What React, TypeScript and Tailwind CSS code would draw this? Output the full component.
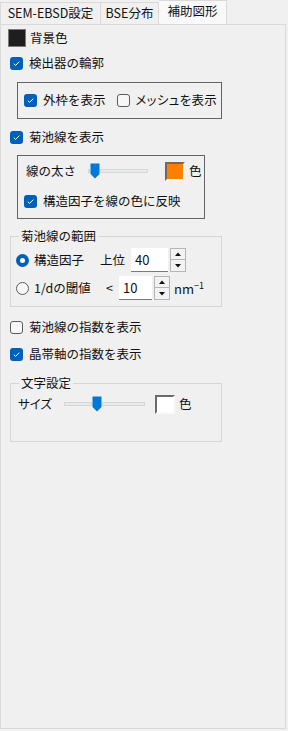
import React from 'react';

const Check = ({ checked }: { checked: boolean }) =>
  checked ? (
    <span className="w-[13px] h-[13px] shrink-0 rounded-[3px] bg-[#005fb8] flex items-center justify-center">
      <svg width="9" height="9" viewBox="0 0 9 9">
        <path d="M1.8 4.7 L3.6 6.4 L7.3 2.6" stroke="white" strokeWidth="1" fill="none" />
      </svg>
    </span>
  ) : (
    <span className="w-[13px] h-[13px] shrink-0 rounded-[3px] border border-[#5c5c5c] bg-[#f7f7f7]" />
  );

const Radio = ({ checked }: { checked: boolean }) =>
  checked ? (
    <span className="w-[13px] h-[13px] shrink-0 rounded-full bg-[#005fb8] flex items-center justify-center">
      <span className="w-[5px] h-[5px] rounded-full bg-white" />
    </span>
  ) : (
    <span className="w-[13px] h-[13px] shrink-0 rounded-full border border-[#5c5c5c] bg-[#f7f7f7]" />
  );

const CheckRow = ({ checked, label, className = '', labelClass = '' }: { checked: boolean; label: string; className?: string; labelClass?: string }) => (
  <div className={`flex items-center gap-[6px] h-[20px] whitespace-nowrap ${className}`}>
    <Check checked={checked} />
    <span className={labelClass}>{label}</span>
  </div>
);

const Thumb = () => (
  <svg width="10" height="16" viewBox="0 0 10 16" className="shrink-0">
    <path d="M0.5 0.5 H9.5 V11 L5 15.5 L0.5 11 Z" fill="#0078d7" />
  </svg>
);

const Slider = ({ before, after }: { before: number; after: number }) => (
  <div className="flex items-center">
    <div className="h-[4px] bg-[#e7eaea] border border-[#d6d6d6]" style={{ width: before }} />
    <Thumb />
    <div className="h-[4px] bg-[#e7eaea] border border-[#d6d6d6]" style={{ width: after }} />
  </div>
);

const Swatch = ({ color }: { color: string }) => (
  <span
    className="block w-[20px] h-[19px] shrink-0 border-2 border-t-[#6b6b6b] border-l-[#6b6b6b] border-r-[#fafafa] border-b-[#fafafa]"
    style={{ backgroundColor: color }}
  />
);

const Spinner = () => (
  <div className="flex flex-col gap-0 ml-[2px]">
    <span className="w-[16px] h-[12px] border border-[#b5b5b5] bg-[#f3f3f3] flex items-center justify-center">
      <svg width="6" height="4" viewBox="0 0 6 4"><path d="M0 4 L3 0.5 L6 4 Z" fill="#111" /></svg>
    </span>
    <span className="w-[16px] h-[12px] border border-t-0 border-[#b5b5b5] bg-[#f3f3f3] flex items-center justify-center">
      <svg width="6" height="4" viewBox="0 0 6 4"><path d="M0 0 L3 3.5 L6 0 Z" fill="#111" /></svg>
    </span>
  </div>
);

const NumBox = ({ value, width }: { value: string; width: string }) => (
  <div className="flex items-center">
    <span className={`${width} h-[24px] bg-white border-b border-[#7a7a7a] flex items-center pl-[4px] text-[13px]`}>{value}</span>
    <Spinner />
  </div>
);

export default function App() {
  return (
    <div className="w-[288px] h-[731px] bg-[#f0f0f0] font-['Noto_Sans_CJK_JP',sans-serif] text-[12.5px] leading-none text-[#111] flex flex-col select-none">
      <div className="flex items-end h-[24px]">
        <div className="h-[22px] w-[101px] border border-b-0 border-[#d9d9d9] bg-[#f0f0f0] flex items-center justify-center pb-[1px]">SEM-EBSD設定</div>
        <div className="h-[22px] w-[58px] border border-l-0 border-b-0 border-[#d9d9d9] bg-[#f0f0f0] flex items-center justify-center pb-[1px]">BSE分布</div>
        <div className="h-[24px] w-[68px] border border-l-0 border-b-0 border-[#d9d9d9] bg-[#f9f9f9] flex items-center justify-center pb-[2px]">補助図形</div>
      </div>
      <div className="w-[286px] h-[705px] border border-[#d9d9d9] bg-[#f0f0f0] flex flex-col pl-[7px]">
        <div className="flex items-center gap-[4px] mt-[4px] h-[18px]">
          <span className="w-[18px] h-[18px] border border-[#7a7a7a] bg-[#1e1e1e]" />
          <span>背景色</span>
        </div>
        <CheckRow checked label="検出器の輪郭" className="mt-[6px] ml-[2px]" />
        <div className="mt-[9px] ml-[9px] w-[205px] h-[37px] border border-[#646464] flex items-center pl-[6px]">
          <CheckRow checked label="外枠を表示" />
          <CheckRow checked={false} label="メッシュを表示" className="ml-[11px]" labelClass="[font-feature-settings:'palt'] tracking-[0.3px]" />
        </div>
        <CheckRow checked label="菊池線を表示" className="mt-[8px] ml-[2px]" />
        <div className="mt-[8px] ml-[9px] w-[188px] h-[64px] border border-[#646464] flex flex-col pl-[6px]">
          <div className="flex items-center h-[22px] mt-[4px] pl-[2px]">
            <span className="w-[62px]">線の太さ</span>
            <Slider before={0} after={48} />
            <span className="ml-[17px]"><Swatch color="#ff8000" /></span>
            <span className="ml-[4px]">色</span>
          </div>
          <CheckRow checked label="構造因子を線の色に反映" className="mt-[9px]" />
        </div>
        <fieldset className="mt-[9px] ml-[2px] w-[212px] h-[79px] border border-[#d5d5d5] px-[5px]">
          <legend className="ml-[3px] px-[2px] leading-[16px]">菊池線の範囲</legend>
          <div className="flex items-center h-[24px] mt-[4px]">
            <Radio checked />
            <span className="ml-[5px] w-[66px]">構造因子</span>
            <span className="w-[31px]">上位</span>
            <NumBox value="40" width="w-[37px]" />
          </div>
          <div className="flex items-center h-[24px] mt-[4px]">
            <Radio checked={false} />
            <span className="ml-[5px] w-[72px]">1/dの閾値</span>
            <span className="w-[13px]">&lt;</span>
            <NumBox value="10" width="w-[33px]" />
            <span className="ml-[4px] text-[13px]">nm<span className="text-[9px] align-[5px]">−1</span></span>
          </div>
        </fieldset>
        <CheckRow checked={false} label="菊池線の指数を表示" className="mt-[10px] ml-[2px]" />
        <CheckRow checked label="晶帯軸の指数を表示" className="mt-[7px] ml-[2px]" />
        <fieldset className="mt-[11px] ml-[2px] w-[212px] h-[67px] border border-[#d5d5d5] px-[7px]">
          <legend className="ml-[1px] px-[2px] leading-[16px]">文字設定</legend>
          <div className="flex items-center h-[22px] mt-[2px]">
            <span className="w-[46px] [font-feature-settings:'palt']">サイズ</span>
            <Slider before={28} after={43} />
            <span className="ml-[10px]"><Swatch color="#ffffff" /></span>
            <span className="ml-[4px]">色</span>
          </div>
        </fieldset>
      </div>
    </div>
  );
}
